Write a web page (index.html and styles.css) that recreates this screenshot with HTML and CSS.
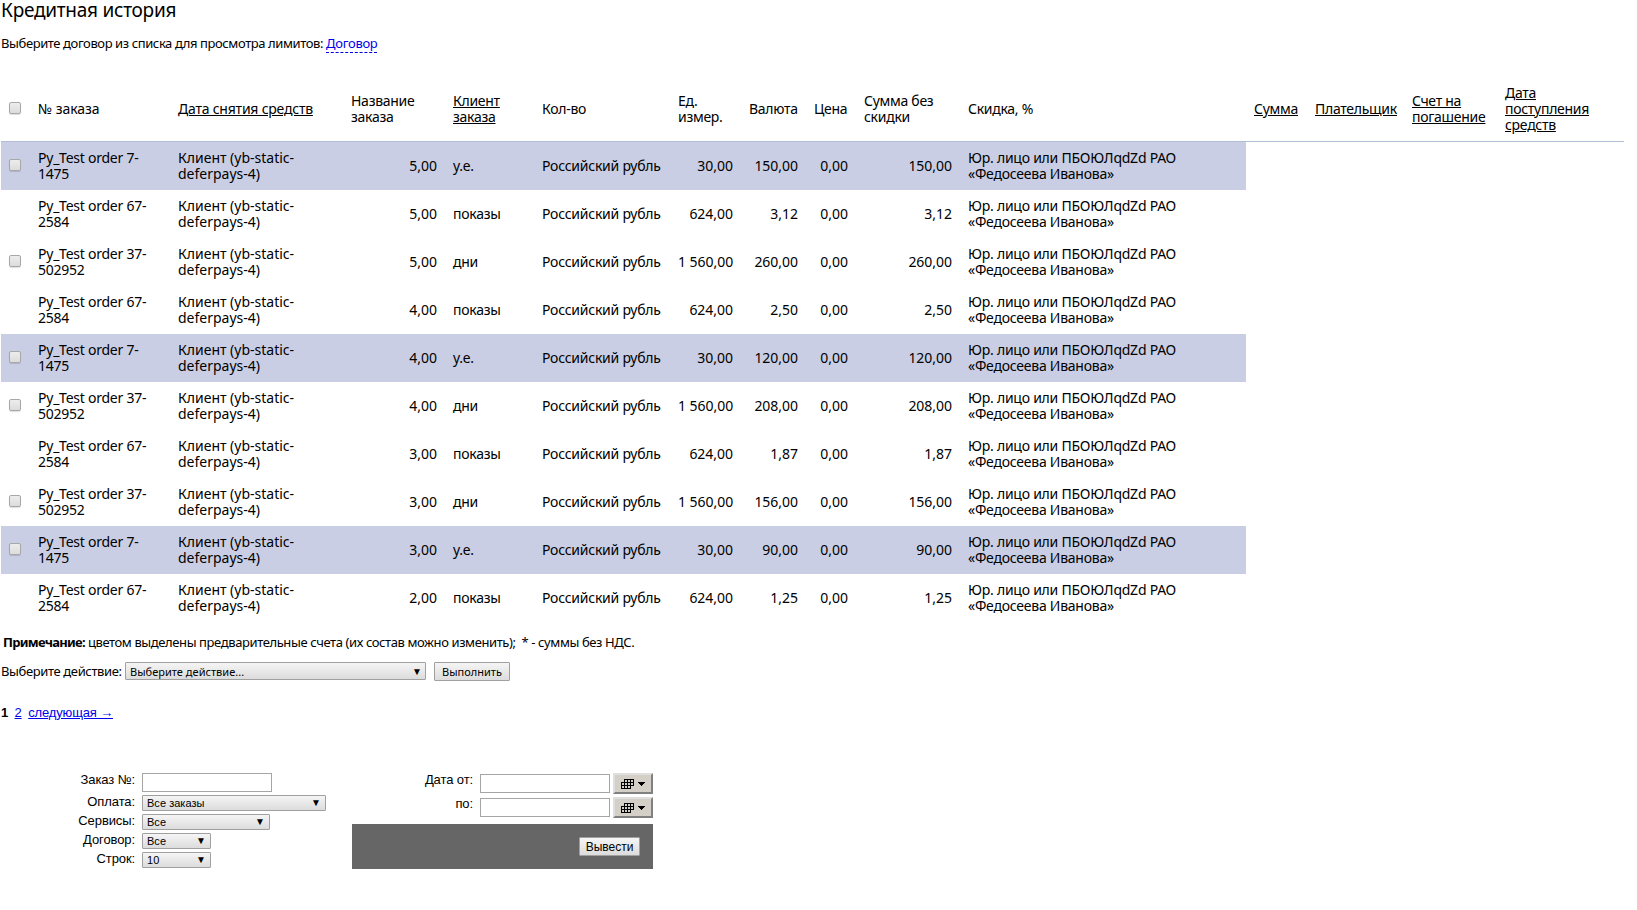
FILE: index.html
```html
<!DOCTYPE html>
<html lang="ru">
<head>
<meta charset="utf-8">
<title>Кредитная история</title>
<link rel="stylesheet" href="styles.css">
</head>
<body>
<h1 class="title"><span>Кредитная история</span></h1>
<p class="intro">Выберите договор из списка для просмотра лимитов: <a class="pseudo">Договор</a></p>
<table class="orders">
<colgroup><col class="c1"><col class="c2"><col class="c3"><col class="c4"><col class="c5"><col class="c6"><col class="c7"><col class="c8"><col class="c9"><col class="c10"><col class="c11"><col class="c12"><col class="c13"><col class="c14"><col class="c15"></colgroup>
<thead><tr><th><i class="check"></i></th><th>№ заказа</th><th><u>Дата снятия средств</u></th><th>Название заказа</th><th><u>Клиент заказа</u></th><th>Кол-во</th><th>Ед. измер.</th><th>Валюта</th><th>Цена</th><th>Сумма без скидки</th><th>Скидка, %</th><th><u>Сумма</u></th><th><u>Плательщик</u></th><th><u>Счет на погашение</u></th><th><u>Дата поступления средств</u></th></tr></thead>
<tbody id="rows"></tbody>
</table>
<p class="note"><b>Примечание:</b> цветом выделены предварительные счета (их состав можно изменить);&nbsp; * - суммы без НДС.</p>
<div class="actions"><span class="actions-label">Выберите действие:</span><div class="select select-action"><span>Выберите действие...</span><i>▼</i></div><button class="button run">Выполнить</button></div>
<div class="pager"><b>1</b><a>2</a><a>следующая →</a></div>
<div class="filters">
<div class="filter-list">
<div class="field field-order"><label>Заказ №:</label><div class="input"></div></div>
<div class="field"><label>Оплата:</label><div class="select w-pay"><span>Все заказы</span><i>▼</i></div></div>
<div class="field"><label>Сервисы:</label><div class="select w-service"><span>Все</span><i>▼</i></div></div>
<div class="field"><label>Договор:</label><div class="select w-small"><span>Все</span><i>▼</i></div></div>
<div class="field"><label>Строк:</label><div class="select w-small"><span>10</span><i>▼</i></div></div>
</div>
<div class="dates">
<div class="date"><label>Дата от:</label><div class="input"></div><div class="calendar"><svg width="24" height="10" viewBox="0 0 24 10" shape-rendering="crispEdges"><path d="M3 0h10v7h-3v3H0V3h3z" fill="#000"/><path d="M4 1h2v2H4zM7 1h2v2H7zM10 1h2v2h-2zM1 4h2v2H1zM4 4h2v2H4zM7 4h2v2H7zM10 4h2v2h-2zM1 7h2v2H1zM4 7h2v2H4zM7 7h2v2H7z" fill="#d4d0c8"/><path d="M17 3h7v1h-1v1h-1v1h-1v1h-1V6h-1V5h-1V4h-1z" fill="#000"/></svg></div></div>
<div class="date"><label>по:</label><div class="input"></div><div class="calendar"><svg width="24" height="10" viewBox="0 0 24 10" shape-rendering="crispEdges"><path d="M3 0h10v7h-3v3H0V3h3z" fill="#000"/><path d="M4 1h2v2H4zM7 1h2v2H7zM10 1h2v2h-2zM1 4h2v2H1zM4 4h2v2H4zM7 4h2v2H7zM10 4h2v2h-2zM1 7h2v2H1zM4 7h2v2H4zM7 7h2v2H7z" fill="#d4d0c8"/><path d="M17 3h7v1h-1v1h-1v1h-1v1h-1V6h-1V5h-1V4h-1z" fill="#000"/></svg></div></div>
<div class="submit"><button class="button show">Вывести</button></div>
</div>
</div>
<script src="rows.js"></script>
</body>
</html>
```
FILE: styles.css
```css
* { box-sizing: border-box; }
body { margin: 0; padding-left: 1px; color: #000; background: #fff; font: 13px/16px "Noto Sans", sans-serif; }
a { color: #00e; text-decoration: underline; }
i { font-style: normal; }
.title { margin: 0; height: 26px; font-size: 19px; line-height: 21px; font-weight: 400; letter-spacing: -.25px; }
.intro { margin: 9px 0 0; height: 17px; letter-spacing: -.4px; }
.intro .pseudo { text-decoration: none; border-bottom: 1px dashed #00e; letter-spacing: -.3px; }
.orders { margin-top: 25px; width: 1623px; table-layout: fixed; border-collapse: separate; border-spacing: 0; font-size: 14px; line-height: 16px; letter-spacing: -.24px; }
.orders th, .orders td { padding: 8px; height: 48px; text-align: left; font-weight: 400; vertical-align: middle; }
.orders th { height: 65px; border-bottom: 1px solid #b2bdd6; letter-spacing: -.28px; }
.orders th:nth-child(2) { letter-spacing: -.08px; }
.orders th:nth-child(3) { letter-spacing: -.22px; }
.orders .num { text-align: right; white-space: nowrap; letter-spacing: -.03px; }
.orders .client { letter-spacing: 0; }
.orders .nowrap { white-space: nowrap; }
.marked td { background: #c9cee4; }
.c1 { width: 29px; } .c2 { width: 140px; } .c3 { width: 173px; } .c4 { width: 102px; } .c5 { width: 89px; }
.c6 { width: 136px; } .c7 { width: 71px; } .c8 { width: 65px; } .c9 { width: 50px; } .c10 { width: 104px; }
.c11 { width: 286px; } .c12 { width: 61px; } .c13 { width: 97px; } .c14 { width: 93px; } .c15 { width: 127px; }
.check { display: block; width: 12px; height: 12px; margin-bottom: 2px; border: 1px solid #a8a8a8; border-radius: 2px; background: linear-gradient(#ededed, #dcdcdc); box-shadow: 0 1px 1px #0002; }
.note { margin: 12px 0 0 2px; height: 16px; letter-spacing: -.4px; }
.note b { letter-spacing: -.72px; }
.actions { display: flex; margin-top: 12px; height: 20px; }
.actions-label { width: 124px; line-height: 18px; white-space: nowrap; letter-spacing: -.37px; }
.select { display: flex; justify-content: space-between; height: 16px; padding: 0 4px 0 4px; border: 1px solid #a0a0a0; border-radius: 1px; background: linear-gradient(#f5f5f5, #dcdcdc); font: 11px/15px "Liberation Sans", "DejaVu Sans", sans-serif; letter-spacing: .03px; }
.select i { font-size: 10px; line-height: 13px; }
.select-action { width: 301px; height: 18px; padding-right: 3px; font-family: "Noto Sans", sans-serif; line-height: 17px; }
.select-action i { line-height: 16px; }
.button { padding: 0; border: 1px solid #a0a0a0; border-radius: 1px; background: linear-gradient(#f5f5f5, #dcdcdc); color: #000; }
.run { width: 76px; height: 19px; margin-left: 8px; font: 11px/16px "Noto Sans", sans-serif; }
.pager { display: flex; gap: 6.5px; margin-top: 23px; font: 13px/16px "Liberation Sans", sans-serif; letter-spacing: -.15px; }
.filters { display: flex; margin-top: 52px; font: 13px/16px "Liberation Sans", sans-serif; letter-spacing: -.1px; }
.filter-list { width: 351px; }
.field { display: flex; height: 19px; }
.field label { width: 134px; margin-right: 7px; text-align: right; line-height: 14px; }
.field-order { height: 22px; }
.input { width: 130px; height: 19px; border: 1px solid #a5a5a5; background: #fff; }
.w-pay { width: 184px; } .w-service { width: 128px; } .w-small { width: 69px; }
.dates { width: 301px; }
.date { display: flex; align-items: center; height: 21px; margin-bottom: 3px; }
.date label { width: 121px; margin-right: 7px; height: 21px; text-align: right; line-height: 14px; }
.calendar { width: 40px; height: 21px; margin-left: 3px; padding: 4px 6px; border: 2px solid; border-color: #dfdfdf #808080 #808080 #dfdfdf; background: #d4d0c8; }
.calendar svg { display: block; }
.submit { height: 45px; margin-top: 6px; padding: 13px; background: #666; text-align: right; line-height: 0; }
.show { width: 61px; height: 19px; font: 12px/16px "Liberation Sans", sans-serif; }
```
FILE: rows.js
```js
// kind: 0 — units, 1 — impressions, 2 — days
const kinds = [
  ['Py_Test order 7-<br>1475', 'у.е.', '30,00'],
  ['Py_Test order 67-<br>2584', 'показы', '624,00'],
  ['Py_Test order 37-<br>502952', 'дни', '1 560,00'],
];
const orders = [
  [0, '5,00', '150,00'], [1, '5,00', '3,12'], [2, '5,00', '260,00'], [1, '4,00', '2,50'], [0, '4,00', '120,00'],
  [2, '4,00', '208,00'], [1, '3,00', '1,87'], [2, '3,00', '156,00'], [0, '3,00', '90,00'], [1, '2,00', '1,25'],
];
document.getElementById('rows').innerHTML = orders.map(([k, qty, sum]) => {
  const [name, unit, price] = kinds[k];
  return `<tr class="${k === 0 ? 'marked' : ''}"><td>${k === 1 ? '' : '<i class="check"></i>'}</td><td>${name}</td><td class="client">Клиент (yb-static-<br>deferpays-4)</td><td class="num">${qty}</td><td>${unit}</td><td class="nowrap">Российский рубль</td><td class="num">${price}</td><td class="num">${sum}</td><td class="num">0,00</td><td class="num">${sum}</td><td class="nowrap">Юр. лицо или ПБОЮЛqdZd РАО<br>«Федосеева Иванова»</td></tr>`;
}).join('');
```
